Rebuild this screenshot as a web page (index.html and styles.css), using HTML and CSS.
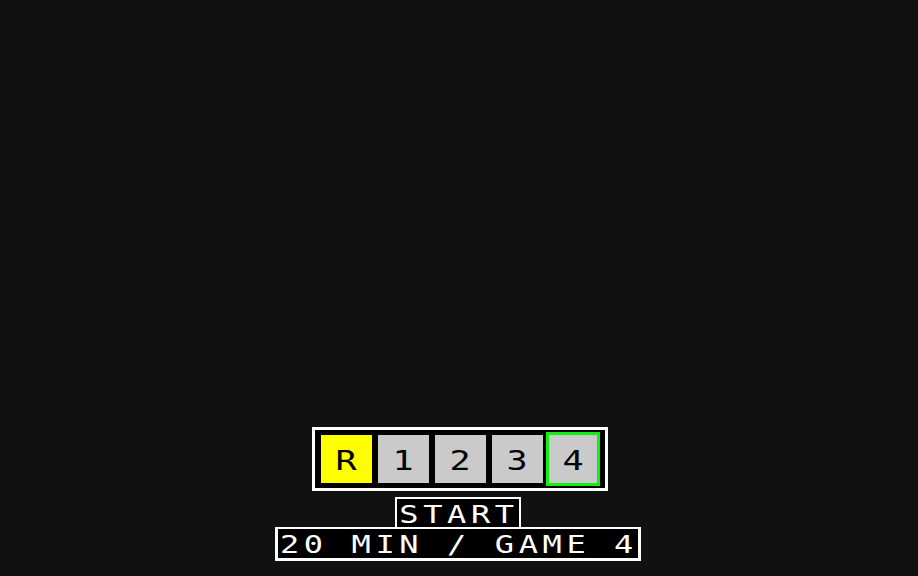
FILE: index.html
```html
<!DOCTYPE html>
<html>
<head>
<meta charset="utf-8">
<link rel="stylesheet" href="styles.css">
</head>
<body>
<main class="screen">
  <div class="slots">
    <div class="slot slot-ready"><span class="glyph">R</span></div>
    <div class="slot slot-gap"><span class="glyph">1</span></div>
    <div class="slot slot-gap"><span class="glyph">2</span></div>
    <div class="slot slot-last"><span class="glyph">3</span></div>
    <div class="slot slot-selected"><span class="glyph">4</span></div>
  </div>
  <div class="label label-start"><span class="label-text">START</span></div>
  <div class="label label-info"><span class="label-text">20 MIN / GAME 4</span></div>
</main>
</body>
</html>
```

FILE: styles.css
```css
* { box-sizing: border-box; }

html, body {
  margin: 0;
  padding: 0;
  background: #111111;
}

.screen {
  width: 918px;
  height: 576px;
  display: flex;
  flex-direction: column;
  align-items: center;
  justify-content: flex-end;
  padding-bottom: 15px;
  font-family: "DejaVu Sans Mono", "Liberation Mono", monospace;
}

.slots {
  display: flex;
  align-items: center;
  background: #000;
  border: 3px solid #ffffff;
  padding: 2px 5px 2px 6px;
  margin-bottom: 6px;
  margin-left: 2px;
}

.slot {
  width: 51px;
  height: 48px;
  background: #cacaca;
  display: flex;
  align-items: center;
  justify-content: center;
  color: #000;
  font-size: 27px;
  line-height: 1;
}

.slot-ready { background: #ffff00; margin-right: 6px; }
.slot-gap { margin-right: 6px; }
.slot-last { margin-right: 3px; }

.slot-selected {
  width: 54px;
  height: 54px;
  border: 3px solid #11ee11;
}

.glyph {
  display: inline-block;
  transform: scaleX(1.3);
  margin-top: 2px;
}

.label {
  background: #000;
  color: #ffffff;
  font-size: 32px;
  letter-spacing: 4.6px;
  padding-left: 2px;
  padding-top: 1px;
  margin-right: 2px;
  white-space: pre;
}

.label-text {
  display: inline-block;
  line-height: 28px;
  height: 28px;
  vertical-align: top;
  transform: scaleY(0.8);
}

.label-start {
  border: 2px solid #ffffff;
  border-bottom: none;
  height: 30px;
}

.label-info {
  border: 3px solid #ffffff;
  border-top-width: 2px;
  height: 34px;
}
```
